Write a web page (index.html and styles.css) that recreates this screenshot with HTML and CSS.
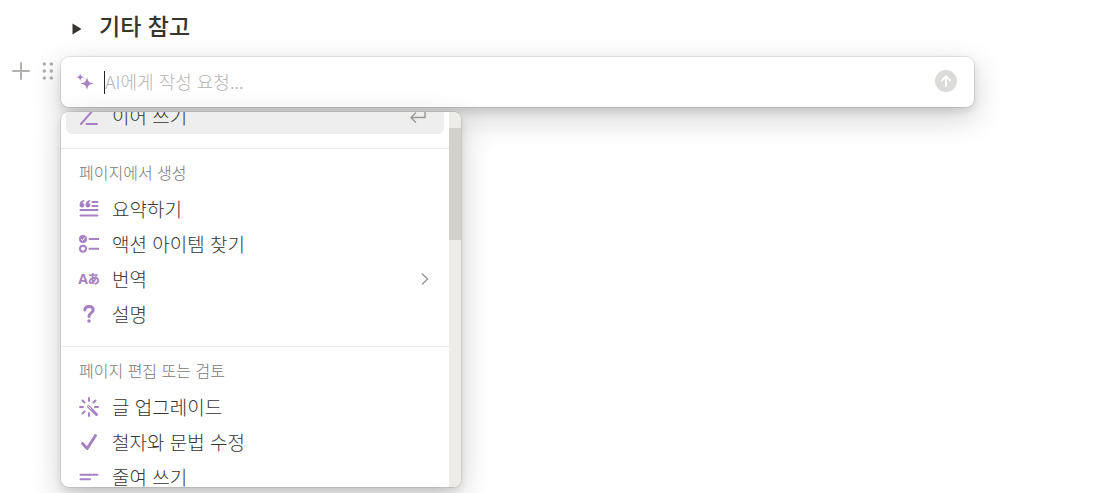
FILE: index.html
```
<!DOCTYPE html>
<html lang="ko">
<head>
    <meta charset="UTF-8">
    <title>기타 참고</title>
    <link rel="stylesheet" href="styles.css">
</head>
<body>
<main class="page">
    <div class="toggle">
        <button class="toggle-btn" aria-label="펼치기"><svg width="10" height="12" viewBox="0 0 10 12"><path d="M.5.5v11l9-5.5z"/></svg></button>
        <h2 class="toggle-title">기타 참고</h2>
    </div>
    <div class="block">
        <div class="handles">
            <button class="add" aria-label="추가"><svg width="18" height="18" viewBox="0 0 18 18"><path d="M9 1v16M1 9h16"/></svg></button>
            <button class="drag" aria-label="이동"><svg width="12" height="18" viewBox="0 0 12 18"><circle cx="2.3" cy="2" r="1.8"/><circle cx="9.3" cy="2" r="1.8"/><circle cx="2.3" cy="9" r="1.8"/><circle cx="9.3" cy="9" r="1.8"/><circle cx="2.3" cy="16" r="1.8"/><circle cx="9.3" cy="16" r="1.8"/></svg></button>
        </div>
        <div class="ai">
            <form class="prompt">
                <svg class="sparkle" width="18" height="18" viewBox="0 0 18 18"><path d="M11 4c1 4.700 1.700 5.400 6.500 6.500-4.800 1.100-5.500 1.800-6.500 6.500-1-4.700-1.700-5.400-6.500-6.500C9.300 9.400 10 8.700 11 4zM4.200.2c.6 2.700 1 3.300 4 4-3 .7-3.400 1.300-4 4-.6-2.700-1-3.300-4-4 3-.7 3.400-1.300 4-4z"/></svg>
                <span class="caret"></span>
                <input class="prompt-input" type="text" placeholder="AI에게 작성 요청..." aria-label="AI에게 작성 요청">
                <button class="send" type="button" aria-label="보내기"><svg width="22" height="22" viewBox="0 0 22 22"><circle cx="11" cy="11" r="11"/><path d="M11 16V6.500M7 10.200l4-4 4 4"/></svg></button>
            </form>
            <div class="menu">
                <div class="menu-list">
                    <section class="group group-first">
                        <button class="item active">
                            <svg class="icon" viewBox="0 0 20 20"><path d="M2 18L15 3M7.500 18H18"/></svg>
                            <span class="label">이어 쓰기</span>
                            <svg class="hint enter" width="18" height="16" viewBox="0 0 18 16"><path d="M16 1v8.500H2M6.500 5L2 9.500 6.500 14"/></svg>
                        </button>
                    </section>
                    <section class="group">
                        <h3 class="group-title">페이지에서 생성</h3>
                        <button class="item">
                            <svg class="icon" viewBox="0 0 20 20"><path d="M1.500 11h17M1.500 16.500h17M13.500 3h5M13.500 7h5"/><path class="fill" d="M5.200 1C2.300 1.400.5 3.200.5 5.700c0 1.800 1 2.800 2.500 2.800s2.400-1 2.400-2.400c0-1.200-.8-2-1.900-2.100.2-.7.900-1.300 1.700-1.600zM11.200 1C8.300 1.400 6.500 3.200 6.500 5.700c0 1.800 1 2.800 2.500 2.800s2.400-1 2.400-2.400c0-1.200-.8-2-1.900-2.100.2-.7.900-1.300 1.700-1.600z"/></svg>
                            <span class="label">요약하기</span>
                        </button>
                        <button class="item">
                            <svg class="icon" viewBox="0 0 20 20"><circle class="fill" cx="4" cy="5" r="4"/><path class="tick" d="M2.200 5.200l1.300 1.300L5.900 3.600"/><circle cx="4" cy="14.700" r="3"/><path d="M10.500 5h9M10.500 14.700h9"/></svg>
                            <span class="label">액션 아이템 찾기</span>
                        </button>
                        <button class="item">
                            <span class="icon icon-text" aria-hidden="true"><b class="latin">A</b><b class="kana">あ</b></span>
                            <span class="label">번역</span>
                            <svg class="hint chevron" width="8" height="12" viewBox="0 0 8 12"><path d="M1.500 1l5 5-5 5"/></svg>
                        </button>
                        <button class="item">
                            <svg class="icon" viewBox="0 0 20 20"><path class="thick" d="M5.800 6C6 3.700 7.600 2.500 10 2.500s4.200 1.300 4.200 3.400c0 3-4.200 3-4.200 6.500"/><circle class="fill" cx="10" cy="17" r="1.800"/></svg>
                            <span class="label">설명</span>
                        </button>
                    </section>
                    <section class="group">
                        <h3 class="group-title">페이지 편집 또는 검토</h3>
                        <button class="item">
                            <svg class="icon" viewBox="0 0 20 20"><path d="M10 1v3M10 16v3M1 10h3M16 10h3M3.500 3.500l2 2M3.500 16.500l2-2M14.500 5.500l2-2"/><path class="wand" d="M9.500 9.500l8 8"/><path class="slit" d="M9.500 9.500l2.600 2.600"/></svg>
                            <span class="label">글 업그레이드</span>
                        </button>
                        <button class="item">
                            <svg class="icon" viewBox="0 0 20 20"><path class="thick" d="M3.500 11.500l4.700 5L16.500 3.500"/></svg>
                            <span class="label">철자와 문법 수정</span>
                        </button>
                        <button class="item">
                            <svg class="icon" viewBox="0 0 20 20"><path d="M1.500 7.700h17M1.500 12.300h9.500"/></svg>
                            <span class="label">줄여 쓰기</span>
                        </button>
                    </section>
                </div>
                <div class="scrollbar"><div class="thumb"></div></div>
            </div>
        </div>
    </div>
</main>
</body>
</html>
```
FILE: styles.css
```
*{
    margin: 0;
    padding: 0;
    box-sizing: border-box;
}
body{
    font-family: "Noto Sans CJK KR", sans-serif;
    color: #37352f;
    background: #fff;
    overflow: hidden;
}
button{
    border: none;
    background: none;
    font: inherit;
    color: inherit;
    cursor: pointer;
}
svg{
    display: block;
    flex: none;
    fill: none;
    stroke-linecap: round;
    stroke-linejoin: round;
}
.page{
    height: 100vh;
    padding: 8px 136px 6px 12px;
    display: flex;
    flex-direction: column;
}
.toggle{
    display: flex;
    align-items: center;
    height: 36px;
    padding-left: 60px;
    gap: 17px;
}
.toggle-btn{
    padding-top: 5px;
}
.toggle-btn svg{
    fill: #37352f;
}
.toggle-title{
    font-size: 23px;
    line-height: 34px;
    padding-bottom: 2px;
    font-weight: 500;
}
.block{
    flex: 1;
    min-height: 0;
    display: flex;
    padding-top: 13px;
}
.handles{
    display: flex;
    align-items: flex-start;
    width: 49px;
    padding-top: 5px;
    gap: 12px;
}
.add svg{
    stroke: #b3b2af;
    stroke-width: 2;
}
.drag svg{
    fill: #b3b2af;
}
.ai{
    flex: 1;
    min-width: 0;
    display: flex;
    flex-direction: column;
    gap: 5px;
}
.prompt,.menu{
    background: #fff;
    border-radius: 8px;
    box-shadow: 0 0 0 1px rgba(15,15,15,.08), 0 4px 8px rgba(15,15,15,.12), 0 10px 32px rgba(15,15,15,.2);
}
.prompt{
    display: flex;
    align-items: center;
    height: 50px;
    padding: 0 17px 0 15px;
}
.sparkle{
    fill: #a782c3;
    margin-right: 10px;
}
.caret{
    width: 1px;
    height: 23px;
    background: #222;
}
.prompt-input{
    flex: 1;
    min-width: 0;
    height: 30px;
    padding-bottom: 2px;
    border: none;
    outline: none;
    background: none;
    font: 300 18px/28px "Noto Sans CJK KR", sans-serif;
    color: #37352f;
}
.prompt-input::placeholder{
    color: #b5b4b2;
}
.send{
    padding-bottom: 2px;
}
.send svg{
    fill: #dbdbda;
}
.send path{
    fill: none;
    stroke: #fff;
    stroke-width: 2;
}
.menu{
    flex: 1;
    min-height: 0;
    width: 400px;
    max-width: 100%;
    display: flex;
    overflow: hidden;
}
.menu-list{
    flex: 1;
    overflow: hidden;
}
/* the list is scrolled a little past its first item */
.group-first{
    margin-top: -13px;
}
.group{
    padding: 0 5px 14px;
}
.group + .group{
    border-top: 1px solid #e9e9e8;
}
.group-title{
    padding: 13px 13px 10px;
    font-size: 16px;
    line-height: 20px;
    font-weight: 300;
    color: #787774;
}
.item{
    display: flex;
    align-items: center;
    width: 100%;
    height: 35px;
    padding: 0 13px 2px;
    gap: 13px;
    border-radius: 6px;
    text-align: left;
}
.item.active{
    background: #eeeeee;
}
.icon{
    width: 20px;
    height: 20px;
    flex: none;
    stroke: #a782c3;
    stroke-width: 2;
}
.icon .fill{
    fill: #a782c3;
    stroke: none;
}
.icon .thick{
    stroke-width: 3;
}
.icon .wand{
    stroke-width: 3;
}
.icon .tick{
    stroke: #fff;
    stroke-width: 1;
}
.icon .slit{
    stroke: #fff;
    stroke-width: 1;
}
.icon-text{
    display: flex;
    align-items: center;
    justify-content: center;
    line-height: 20px;
    color: #a782c3;
}
.latin{
    font-family: "Open Sans", sans-serif;
    font-size: 14px;
}
.kana{
    font-family: "Noto Sans CJK JP", sans-serif;
    font-size: 12px;
    font-weight: 900;
}
.label{
    flex: 1;
    font-size: 19px;
    line-height: 28px;
    font-weight: 300;
}
.hint{
    stroke: #9b9a97;
    stroke-width: 1.5;
}
.enter{
    margin-right: 4px;
}
.chevron{
    margin-right: 2px;
}
.scrollbar{
    width: 12px;
    padding-top: 16px;
    background: #edece9;
}
.thumb{
    height: 112px;
    background: #d3d1cb;
}
```
